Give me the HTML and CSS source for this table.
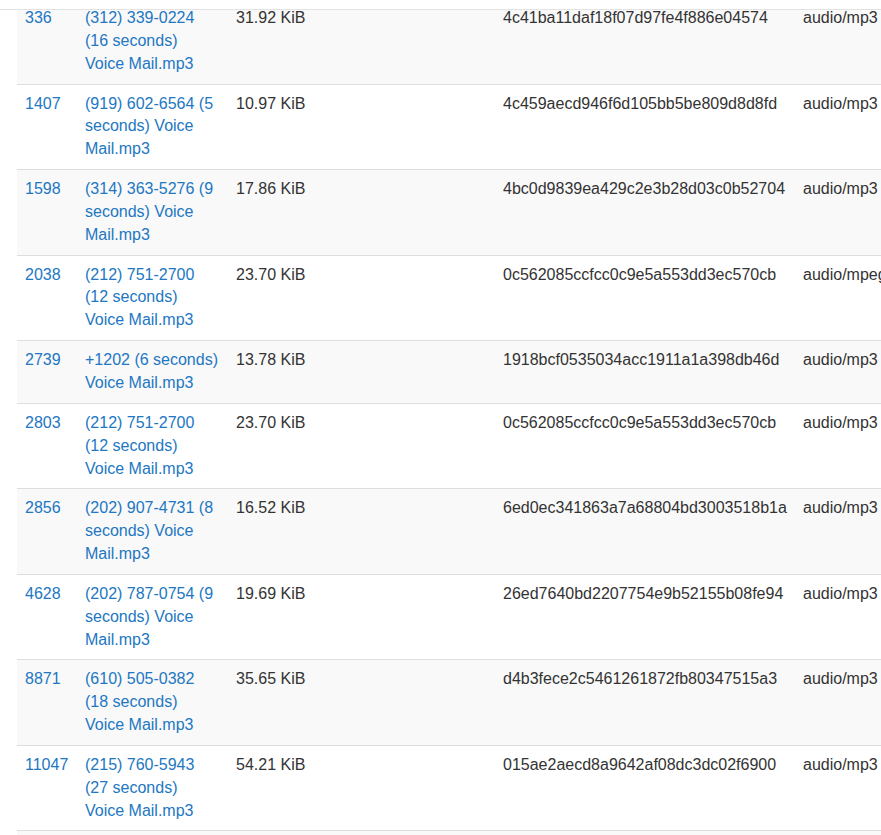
FILE: index.html
```html
<!DOCTYPE html>
<html>
<head>
<meta charset="utf-8">
<link rel="stylesheet" href="styles.css">
</head>
<body>
<div class="topbar"></div>
<div class="wrap">
<table class="files">
<colgroup>
<col class="c-id"><col class="c-name"><col class="c-size"><col class="c-hash"><col class="c-type">
</colgroup>
<tbody>
<tr><td><a href="#">336</a></td><td><a href="#">(312) 339-0224 (16 seconds) Voice Mail.mp3</a></td><td>31.92 KiB</td><td>4c41ba11daf18f07d97fe4f886e04574</td><td>audio/mp3</td></tr>
<tr><td><a href="#">1407</a></td><td><a href="#">(919) 602-6564 (5 seconds) Voice Mail.mp3</a></td><td>10.97 KiB</td><td>4c459aecd946f6d105bb5be809d8d8fd</td><td>audio/mp3</td></tr>
<tr><td><a href="#">1598</a></td><td><a href="#">(314) 363-5276 (9 seconds) Voice Mail.mp3</a></td><td>17.86 KiB</td><td>4bc0d9839ea429c2e3b28d03c0b52704</td><td>audio/mp3</td></tr>
<tr><td><a href="#">2038</a></td><td><a href="#">(212) 751-2700 (12 seconds) Voice Mail.mp3</a></td><td>23.70 KiB</td><td>0c562085ccfcc0c9e5a553dd3ec570cb</td><td>audio/mpeg</td></tr>
<tr><td><a href="#">2739</a></td><td><a href="#">+1202 (6 seconds) Voice Mail.mp3</a></td><td>13.78 KiB</td><td>1918bcf0535034acc1911a1a398db46d</td><td>audio/mp3</td></tr>
<tr><td><a href="#">2803</a></td><td><a href="#">(212) 751-2700 (12 seconds) Voice Mail.mp3</a></td><td>23.70 KiB</td><td>0c562085ccfcc0c9e5a553dd3ec570cb</td><td>audio/mp3</td></tr>
<tr><td><a href="#">2856</a></td><td><a href="#">(202) 907-4731 (8 seconds) Voice Mail.mp3</a></td><td>16.52 KiB</td><td>6ed0ec341863a7a68804bd3003518b1a</td><td>audio/mp3</td></tr>
<tr><td><a href="#">4628</a></td><td><a href="#">(202) 787-0754 (9 seconds) Voice Mail.mp3</a></td><td>19.69 KiB</td><td>26ed7640bd2207754e9b52155b08fe94</td><td>audio/mp3</td></tr>
<tr><td><a href="#">8871</a></td><td><a href="#">(610) 505-0382 (18 seconds) Voice Mail.mp3</a></td><td>35.65 KiB</td><td>d4b3fece2c5461261872fb80347515a3</td><td>audio/mp3</td></tr>
<tr><td><a href="#">11047</a></td><td><a href="#">(215) 760-5943 (27 seconds) Voice Mail.mp3</a></td><td>54.21 KiB</td><td>015ae2aecd8a9642af08dc3dc02f6900</td><td>audio/mp3</td></tr>
<tr class="next"><td></td><td></td><td></td><td></td><td></td></tr>
</tbody>
</table>
</div>
</body>
</html>
```

FILE: styles.css
```css
html, body {
  margin: 0;
  padding: 0;
  background: #fff;
  overflow: hidden;
}
body {
  font-family: "Liberation Sans", Arial, sans-serif;
  font-size: 16px;
  line-height: 1.42857143;
  color: #333;
}
.topbar {
  position: fixed;
  top: 0;
  left: 0;
  right: 0;
  height: 9px;
  background: #fff;
  border-bottom: 1px solid #e3e3e3;
  z-index: 2;
}
.wrap {
  padding-left: 17px;
  margin-top: -2px;
  overflow: hidden;
}
.files {
  border-collapse: collapse;
  border-spacing: 0;
  table-layout: fixed;
  width: 1000px;
}
.c-id { width: 60px; }
.c-name { width: 151px; }
.c-size { width: 267px; }
.c-hash { width: 300px; }
.c-type { width: 222px; }
.files td {
  padding: 8px;
  vertical-align: top;
  border-top: 1px solid #ddd;
  white-space: normal;
}
.files td:nth-child(4), .files td:nth-child(5) {
  white-space: nowrap;
}
.files tbody tr:nth-of-type(odd) {
  background: #f9f9f9;
}
.files tr.next td {
  height: 23px;
}
.files a {
  color: #2277c2;
  text-decoration: none;
}
```
